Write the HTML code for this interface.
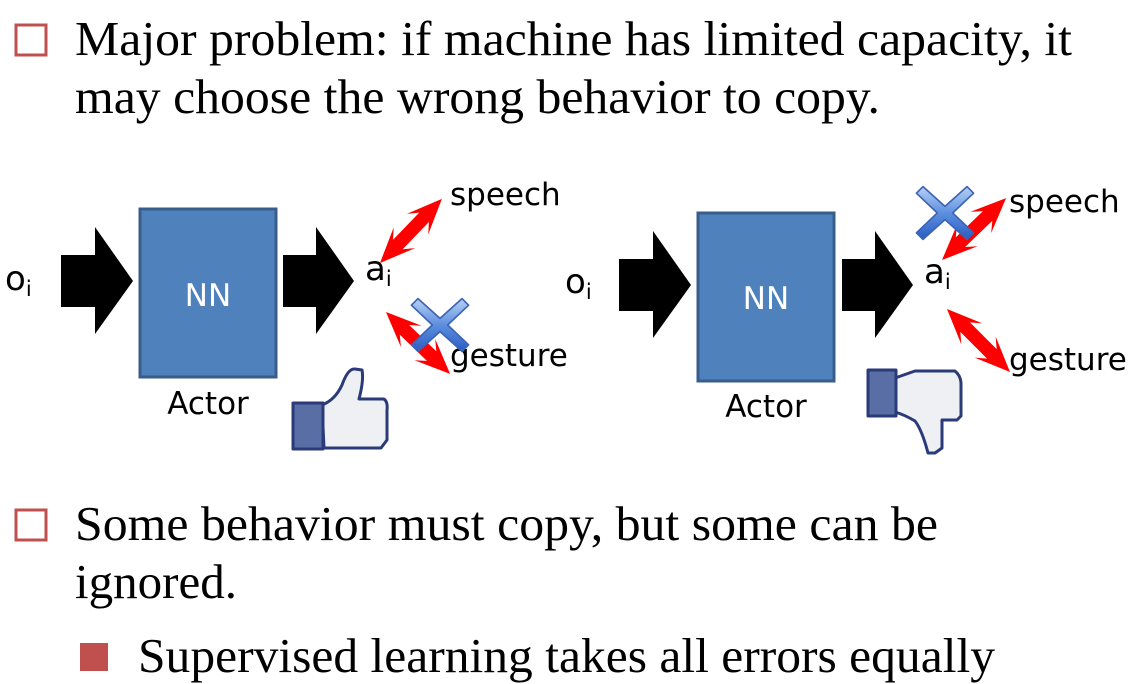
<!DOCTYPE html>
<html><head><meta charset="utf-8"><style>
body{margin:0;width:1131px;height:684px;background:#fff;overflow:hidden}
svg{position:absolute;left:0;top:0}
</style></head><body>
<svg width="1131" height="684" viewBox="0 0 1131 684">
<defs>
<linearGradient id="xg" x1="0" y1="0" x2="0" y2="1"><stop offset="0" stop-color="#b8d0f4"/><stop offset="0.5" stop-color="#5d8fe0"/><stop offset="1" stop-color="#2a5cc4"/></linearGradient>
<g id="x"><path d="M-20,-24 L0,-6 L20,-24 L26,-18 L7,0 L26,18 L20,24 L0,6 L-20,24 L-26,18 L-7,0 L-26,-18 Z" fill="url(#xg)" stroke="#3c64b4" stroke-width="1.5" stroke-linejoin="round"/></g>
<g id="da"><path d="M0,0 L26,-11 L19,-5 L47,-5 L40,-11 L66,0 L40,11 L47,5 L19,5 L26,11 Z" fill="#f00"/></g>
</defs>
<g font-family="Liberation Serif, serif" font-size="49" fill="#000">
<rect x="16" y="25" width="30" height="30" fill="none" stroke="#c0504d" stroke-width="3"/>
<text x="75" y="55" textLength="997" lengthAdjust="spacingAndGlyphs">Major problem: if machine has limited capacity, it</text>
<text x="75" y="113" textLength="805" lengthAdjust="spacingAndGlyphs">may choose the wrong behavior to copy.</text>
<rect x="16" y="510" width="30" height="30" fill="none" stroke="#c0504d" stroke-width="3"/>
<text x="75" y="540" textLength="863" lengthAdjust="spacingAndGlyphs">Some behavior must copy, but some can be</text>
<text x="75" y="598" textLength="162" lengthAdjust="spacingAndGlyphs">ignored.</text>
<rect x="80" y="643" width="28" height="28" fill="#c0504d"/>
<text x="138" y="672" textLength="857" lengthAdjust="spacingAndGlyphs">Supervised learning takes all errors equally</text>
</g>
<g font-family="DejaVu Sans, Liberation Sans, sans-serif" fill="#000">
<text x="5" y="290" font-size="34">o<tspan font-size="21" dy="6">i</tspan></text>
<path d="M61,255 H95 V227 L133,281 L95,334 V307 H61 Z"/>
<rect x="140" y="209" width="136" height="168" fill="#4f81bd" stroke="#385d8a" stroke-width="3"/>
<text x="208" y="306" font-size="31" fill="#fff" text-anchor="middle">NN</text>
<text x="208" y="414" font-size="31" text-anchor="middle">Actor</text>
<path d="M283,255 H316 V227 L354,281 L316,334 V307 H283 Z"/>
<text x="365" y="280" font-size="34">a<tspan font-size="21" dy="6">i</tspan></text>
<text x="450" y="205" font-size="31">speech</text>
<text x="450" y="366" font-size="31">gesture</text>
<use href="#da" transform="translate(380,263) rotate(-46) scale(1.35)"/>
<use href="#da" transform="translate(386,312) rotate(44) scale(1.35)"/>
<use href="#x" transform="translate(440,325) scale(1.1)"/>
<text x="565" y="293" font-size="34">o<tspan font-size="21" dy="6">i</tspan></text>
<path d="M619,259 H653 V231 L691,285 L653,338 V311 H619 Z"/>
<rect x="698" y="213" width="136" height="168" fill="#4f81bd" stroke="#385d8a" stroke-width="3"/>
<text x="766" y="309" font-size="31" fill="#fff" text-anchor="middle">NN</text>
<text x="766" y="417" font-size="31" text-anchor="middle">Actor</text>
<path d="M842,259 H875 V231 L913,285 L875,338 V311 H842 Z"/>
<text x="924" y="283" font-size="34">a<tspan font-size="21" dy="6">i</tspan></text>
<text x="1009" y="212" font-size="31">speech</text>
<text x="1009" y="370" font-size="31">gesture</text>
<use href="#da" transform="translate(942,260) rotate(-44) scale(1.35)"/>
<use href="#da" transform="translate(947,309) rotate(45) scale(1.35)"/>
<use href="#x" transform="translate(945,213) scale(1.1)"/>
</g>
<g stroke="#2b3b7a" stroke-width="3" stroke-linejoin="round">
<path d="M322,405 Q335,400 342,385 Q348,368 355,369 L362,370 Q364,380 359,399 L384,399 Q388,402 387,410 L387,440 L381,448 L324,448 Z" fill="#eef0f4"/>
<rect x="293" y="403" width="30" height="46" fill="#5a6ea6"/>
</g>
<g stroke="#2b3b7a" stroke-width="3" stroke-linejoin="round">
<path d="M895,378 L915,371 L955,371 Q961,376 961,384 L961,416 L957,420 L942,420 L942,448 L935,453 L928,453 Q922,430 915,421 Q905,415 895,412 Z" fill="#eef0f4"/>
<rect x="868" y="370" width="28" height="46" fill="#5a6ea6"/>
</g>
</svg>
</body></html>
